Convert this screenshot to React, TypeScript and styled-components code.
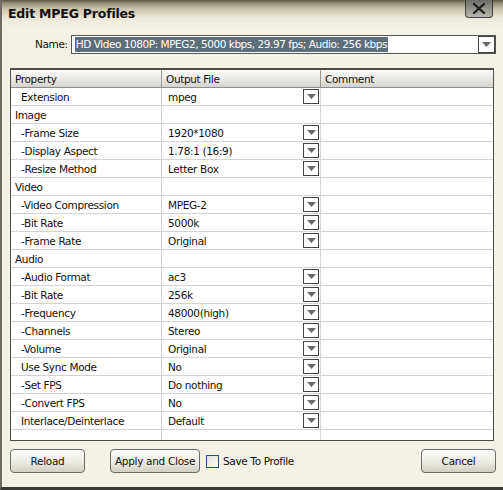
import React from 'react';
import styled, { createGlobalStyle } from 'styled-components';

const GlobalStyle = createGlobalStyle`
  html, body {
    margin: 0;
    padding: 0;
    background: #f4f2e6;
  }
  body {
    font-family: Tahoma, "DejaVu Sans", sans-serif;
    font-size: 11px;
    color: #000;
  }
`;

const Window = styled.div`
  width: 503px;
  height: 490px;
  box-sizing: border-box;
  display: flex;
  flex-direction: column;
  background: #f4f2e6;
  border-left: 2px solid #6e6c62;
  border-bottom: 3px solid #3a3a36;
  overflow: hidden;
`;

const TitleBar = styled.div`
  height: 27px;
  display: flex;
  align-items: center;
  justify-content: space-between;
  padding: 0 10px 0 6px;
  background: linear-gradient(#5c5843 0px, #8f8a70 3px, #c9c5ae 9px, #ebe8d8 18px, #f4f2e6 27px);
`;

const Title = styled.div`
  font-family: "DejaVu Sans", sans-serif;
  font-weight: bold;
  font-size: 12.5px;
  letter-spacing: -0.2px;
  color: #111;
  margin-top: -1px;
`;

const CloseButton = styled.div`
  width: 26px;
  height: 17px;
  margin-top: -10px;
  border: 1px solid #3f3f3f;
  border-top: none;
  border-radius: 0 0 4px 4px;
  background: linear-gradient(#6b6b66, #b9b8b0);
  display: flex;
  align-items: center;
  justify-content: center;
`;

const NameRow = styled.div`
  display: flex;
  align-items: center;
  padding: 7px 7px 0 33px;
  gap: 3px;
  height: 20px;
`;

const Label = styled.span`
  font-family: "DejaVu Sans", sans-serif;
  font-size: 10.5px;
  letter-spacing: -0.35px;
  color: #111;
`;

const Combo = styled.div`
  flex: 1;
  height: 19px;
  box-sizing: border-box;
  border: 1px solid #555;
  background: #fff;
  display: flex;
  align-items: center;
  padding-left: 3px;
  justify-content: space-between;
`;

const Selected = styled.span`
  background: #5d6e79;
  color: #fff;
  font-family: "DejaVu Sans", sans-serif;
  font-size: 10.5px;
  letter-spacing: -0.45px;
  line-height: 15px;
  padding: 0 1px;
`;

const DropButton = styled.div<{ $w?: number; $h?: number; $flush?: boolean }>`
  width: ${p => p.$w ?? 16}px;
  height: ${p => p.$h ?? 15}px;
  box-sizing: border-box;
  border: 1px solid #444;
  background: #fff;
  display: flex;
  align-items: center;
  justify-content: center;
  margin-right: ${p => (p.$flush ? 0 : 1)}px;
`;

const Table = styled.div`
  margin: 14px 9px 0 8px;
  border: 1px solid #4d4d4d;
  border-top-width: 2px;
  background: #fff;
  height: 373px;
  box-sizing: border-box;
  overflow: hidden;
`;

const Row = styled.div<{ $header?: boolean }>`
  display: grid;
  grid-template-columns: 151px 159px 1fr;
  height: 18px;
  box-sizing: border-box;
  border-bottom: 1px solid ${p => (p.$header ? '#8d8d8d' : '#d3d3d3')};
  background: ${p => (p.$header ? 'linear-gradient(#fbfbfa, #e6e5e0 60%, #d4d3cd)' : '#fff')};
`;

const Cell = styled.div<{ $indent?: number; $header?: boolean }>`
  display: flex;
  align-items: center;
  justify-content: space-between;
  padding-left: ${p => p.$indent ?? 4}px;
  border-right: 1px solid ${p => (p.$header ? '#9a9a9a' : '#d3d3d3')};
  font-family: "DejaVu Sans", sans-serif;
  font-size: 10.5px;
  letter-spacing: -0.35px;
  color: #111;
  white-space: nowrap;
  overflow: hidden;
  &:last-child {
    border-right: none;
  }
`;

const Footer = styled.div`
  display: flex;
  align-items: center;
  padding: 8px 7px 0 8px;
`;

const Button = styled.div<{ $w: number }>`
  width: ${p => p.$w}px;
  height: 24px;
  box-sizing: border-box;
  border: 1px solid #6a6a66;
  border-radius: 4px;
  background: linear-gradient(#fdfdfb, #ecebe4 55%, #d2d0c4);
  display: flex;
  align-items: center;
  justify-content: center;
  font-family: "DejaVu Sans", sans-serif;
  font-size: 10.5px;
  letter-spacing: -0.3px;
  color: #111;
`;

const CheckWrap = styled.label`
  display: flex;
  align-items: center;
  gap: 4px;
  margin-left: 6px;
  font-family: "DejaVu Sans", sans-serif;
  font-size: 10.5px;
  letter-spacing: -0.35px;
  color: #111;
`;

const CheckBox = styled.span`
  width: 13px;
  height: 13px;
  box-sizing: border-box;
  border: 1px solid #1c5180;
  background: linear-gradient(135deg, #dcdcd5, #fff);
`;

const Spacer = styled.div<{ $w?: number }>`
  ${p => (p.$w ? `width: ${p.$w}px;` : 'flex: 1;')}
`;

const Arrow = () => (
  <svg width="9" height="5" viewBox="0 0 9 5">
    <path d="M0 0 H9 L4.5 5 Z" fill="#6a6a6a" />
  </svg>
);

type Item = { name: string; value?: string; indent: number; drop?: boolean };

const rows: Item[] = [
  { name: 'Extension', value: 'mpeg', indent: 10, drop: true },
  { name: 'Image', indent: 4 },
  { name: '-Frame Size', value: '1920*1080', indent: 10, drop: true },
  { name: '-Display Aspect', value: '1.78:1 (16:9)', indent: 10, drop: true },
  { name: '-Resize Method', value: 'Letter Box', indent: 10, drop: true },
  { name: 'Video', indent: 4 },
  { name: '-Video Compression', value: 'MPEG-2', indent: 10, drop: true },
  { name: '-Bit Rate', value: '5000k', indent: 10, drop: true },
  { name: '-Frame Rate', value: 'Original', indent: 10, drop: true },
  { name: 'Audio', indent: 4 },
  { name: '-Audio Format', value: 'ac3', indent: 10, drop: true },
  { name: '-Bit Rate', value: '256k', indent: 10, drop: true },
  { name: '-Frequency', value: '48000(high)', indent: 10, drop: true },
  { name: '-Channels', value: 'Stereo', indent: 10, drop: true },
  { name: '-Volume', value: 'Original', indent: 10, drop: true },
  { name: 'Use Sync Mode', value: 'No', indent: 10, drop: true },
  { name: '-Set FPS', value: 'Do nothing', indent: 10, drop: true },
  { name: '-Convert FPS', value: 'No', indent: 10, drop: true },
  { name: 'Interlace/Deinterlace', value: 'Default', indent: 10, drop: true },
];

const App: React.FC = () => {
  return (
    <>
      <GlobalStyle />
      <Window>
        <TitleBar>
          <Title>Edit MPEG Profiles</Title>
          <CloseButton>
            <svg width="14" height="11" viewBox="0 0 14 11">
              <path d="M2 1 L12 10 M12 1 L2 10" stroke="#1a1a1a" strokeWidth="2.2" strokeLinecap="round" />
            </svg>
          </CloseButton>
        </TitleBar>

        <NameRow>
          <Label>Name:</Label>
          <Combo>
            <Selected>HD Video 1080P: MPEG2, 5000 kbps, 29.97 fps; Audio: 256 kbps</Selected>
            <DropButton $w={17} $h={17} $flush>
              <Arrow />
            </DropButton>
          </Combo>
        </NameRow>

        <Table>
          <Row $header>
            <Cell $header>Property</Cell>
            <Cell $header>Output File</Cell>
            <Cell $header>Comment</Cell>
          </Row>
          {rows.map((r, i) => (
            <Row key={i}>
              <Cell $indent={r.indent}>{r.name}</Cell>
              <Cell $indent={6}>
                {r.value ?? ''}
                {r.drop && (
                  <DropButton>
                    <Arrow />
                  </DropButton>
                )}
              </Cell>
              <Cell />
            </Row>
          ))}
          <Row>
            <Cell />
            <Cell />
            <Cell />
          </Row>
        </Table>

        <Footer>
          <Button $w={75}>Reload</Button>
          <Spacer $w={25} />
          <Button $w={90}>Apply and Close</Button>
          <CheckWrap>
            <CheckBox />
            Save To Profile
          </CheckWrap>
          <Spacer />
          <Button $w={75}>Cancel</Button>
        </Footer>
      </Window>
    </>
  );
};

export default App;
